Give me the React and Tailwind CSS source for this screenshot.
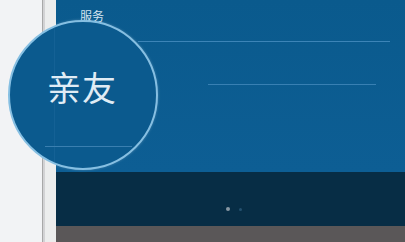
export default function App() {
  return (
    <div className="relative w-[405px] h-[242px] overflow-hidden flex bg-[#f3f4f6] font-['Noto_Sans_CJK_SC',sans-serif]">
      {/* left side of the page + phone bezel */}
      <div className="w-[42px] shrink-0 bg-[#f2f3f5]" />
      <div className="w-px shrink-0 bg-[#a8a8a8]" />
      <div className="w-[2px] shrink-0 bg-[#d2d2d4]" />
      <div className="w-[11px] shrink-0 bg-[#eceded]" />

      {/* phone screen */}
      <div className="flex-1 flex flex-col">
        <div className="h-[172px] bg-gradient-to-b from-[#0a5a8d] to-[#0d5e94] flex flex-col">
          <div className="h-[41px] pl-[24px] pt-[9px] text-[12px] leading-[14px] text-[#d3e2ee]">服务</div>
          <div className="h-px ml-[82px] mr-[15px] bg-[#3c84b7]" />
          <div className="h-[42px]" />
          <div className="h-px ml-[152px] mr-[29px] bg-[#3880b3]" />
        </div>
        <div className="h-[54px] bg-[#072d45] flex items-end justify-start pl-[170px] pb-[15px] gap-[9px]">
          <span className="w-[4px] h-[4px] rounded-full bg-[#8797a3]" />
          <span className="w-[3px] h-[3px] rounded-full bg-[#24506e] mb-[0.5px]" />
        </div>
        <div className="flex-1 bg-[#5a5758]" />
      </div>

      {/* magnifier */}
      <div className="absolute left-[8px] top-[20px] w-[150px] h-[150px] rounded-full border-2 border-[#86bfe2] bg-[#0b5a8e] overflow-hidden shadow-[0_0_3px_rgba(255,255,255,0.25)]">
        <div className="absolute left-[44px] top-0 bottom-0 w-px bg-[#1a659a] opacity-60" />
        <div className="absolute left-[37px] top-[47px] text-[34px] leading-[36px] tracking-[1px] text-[#e0ecf5]">亲友</div>
        <div className="absolute left-[35px] right-[24px] top-[124px] h-px bg-[#3a7fb0]" />
      </div>
    </div>
  );
}
